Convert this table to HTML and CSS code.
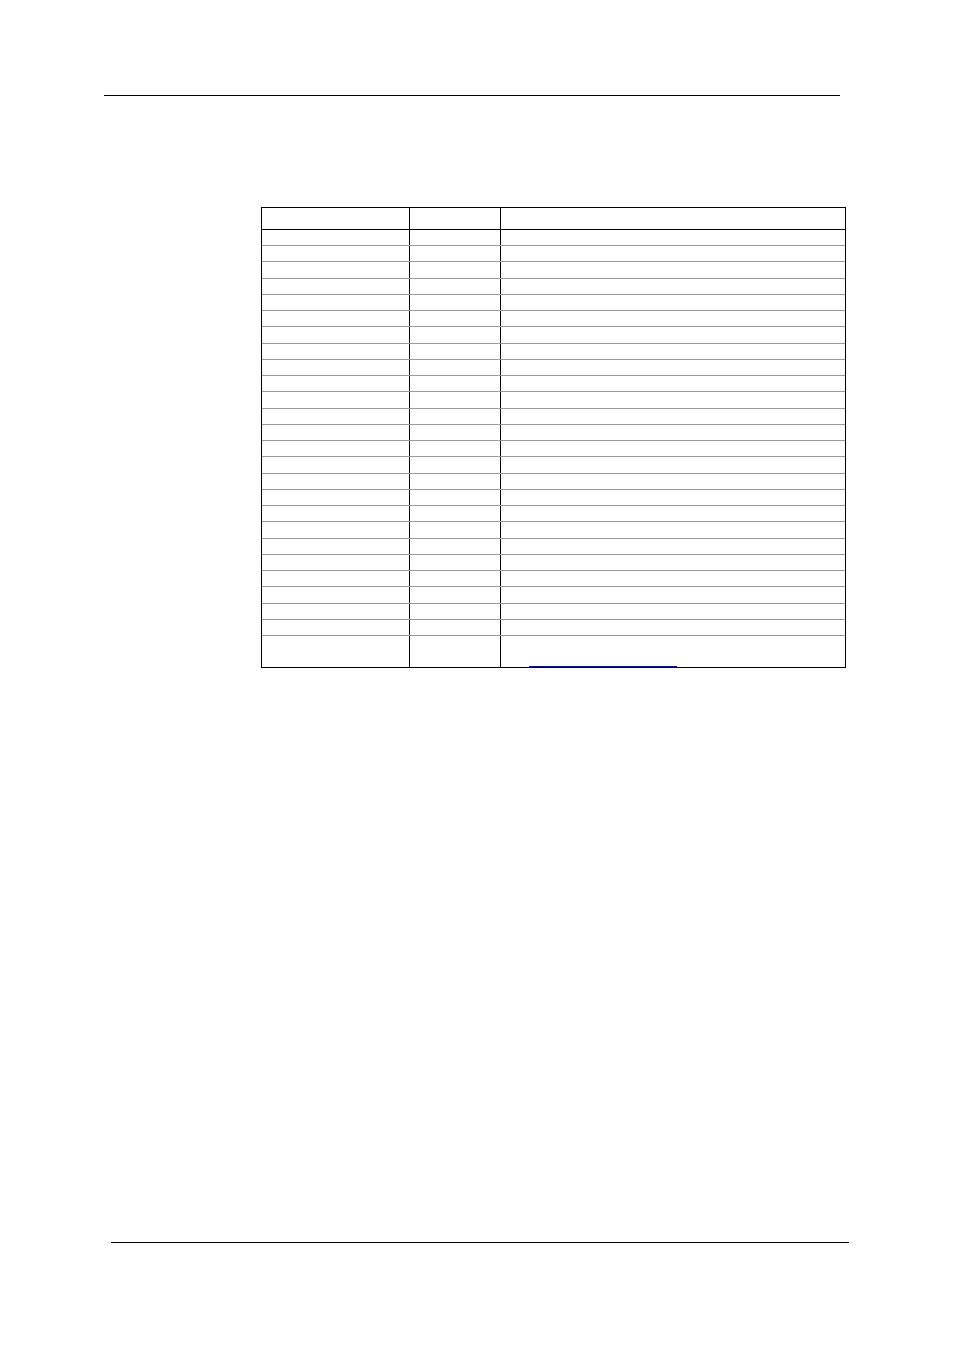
FILE: index.html
```html
<!DOCTYPE html>
<html lang="en">
<head>
<meta charset="utf-8">
<title>Document page</title>
<link rel="stylesheet" href="styles.css">
</head>
<body>
<div class="page">
  <div class="header-rule"></div>
  <div class="grid-table">
    <div class="row head"><div class="c1"></div><div class="c2"></div><div class="c3"></div></div>
    <div class="row"><div class="c1"></div><div class="c2"></div><div class="c3"></div></div>
    <div class="row"><div class="c1"></div><div class="c2"></div><div class="c3"></div></div>
    <div class="row"><div class="c1"></div><div class="c2"></div><div class="c3"></div></div>
    <div class="row"><div class="c1"></div><div class="c2"></div><div class="c3"></div></div>
    <div class="row"><div class="c1"></div><div class="c2"></div><div class="c3"></div></div>
    <div class="row"><div class="c1"></div><div class="c2"></div><div class="c3"></div></div>
    <div class="row"><div class="c1"></div><div class="c2"></div><div class="c3"></div></div>
    <div class="row"><div class="c1"></div><div class="c2"></div><div class="c3"></div></div>
    <div class="row"><div class="c1"></div><div class="c2"></div><div class="c3"></div></div>
    <div class="row"><div class="c1"></div><div class="c2"></div><div class="c3"></div></div>
    <div class="row"><div class="c1"></div><div class="c2"></div><div class="c3"></div></div>
    <div class="row"><div class="c1"></div><div class="c2"></div><div class="c3"></div></div>
    <div class="row"><div class="c1"></div><div class="c2"></div><div class="c3"></div></div>
    <div class="row"><div class="c1"></div><div class="c2"></div><div class="c3"></div></div>
    <div class="row"><div class="c1"></div><div class="c2"></div><div class="c3"></div></div>
    <div class="row"><div class="c1"></div><div class="c2"></div><div class="c3"></div></div>
    <div class="row"><div class="c1"></div><div class="c2"></div><div class="c3"></div></div>
    <div class="row"><div class="c1"></div><div class="c2"></div><div class="c3"></div></div>
    <div class="row"><div class="c1"></div><div class="c2"></div><div class="c3"></div></div>
    <div class="row"><div class="c1"></div><div class="c2"></div><div class="c3"></div></div>
    <div class="row"><div class="c1"></div><div class="c2"></div><div class="c3"></div></div>
    <div class="row"><div class="c1"></div><div class="c2"></div><div class="c3"></div></div>
    <div class="row"><div class="c1"></div><div class="c2"></div><div class="c3"></div></div>
    <div class="row"><div class="c1"></div><div class="c2"></div><div class="c3"></div></div>
    <div class="row"><div class="c1"></div><div class="c2"></div><div class="c3"></div></div>
    <div class="row last"><div class="c1"></div><div class="c2"></div><div class="c3 link-cell"><a class="link" href="#"></a></div></div>
  </div>
  <div class="footer-rule"></div>
</div>
</body>
</html>
```
FILE: styles.css
```css
html, body {
  margin: 0;
  padding: 0;
  background: #ffffff;
  font-family: "Liberation Sans", Arial, sans-serif;
}

.page {
  width: 954px;
  height: 1350px;
  display: flex;
  flex-direction: column;
}

.header-rule {
  margin-top: 95px;
  margin-left: 104px;
  width: 736px;
  height: 1px;
  background: #000000;
}

.grid-table {
  margin-top: 111px;
  margin-left: 261px;
  width: 585px;
  box-sizing: border-box;
  border: 1px solid #000000;
  display: flex;
  flex-direction: column;
}

.row {
  display: grid;
  grid-template-columns: 148px 91px 1fr;
  height: 16.25px;
  box-sizing: border-box;
  border-bottom: 1px solid #999999;
}

.row.head {
  height: 21.75px;
  border-bottom: 1px solid #000000;
}

.row.last {
  height: 31px;
  border-bottom: none;
}

.c1, .c2 {
  border-right: 1px solid #000000;
}

.link-cell {
  display: flex;
  align-items: flex-end;
  padding-left: 28px;
}

.link {
  display: block;
  width: 148px;
  height: 0;
  border-bottom: 1px solid #0000ff;
}

.footer-rule {
  margin-top: 574px;
  margin-left: 111px;
  width: 738px;
  height: 1px;
  background: #000000;
}
```
